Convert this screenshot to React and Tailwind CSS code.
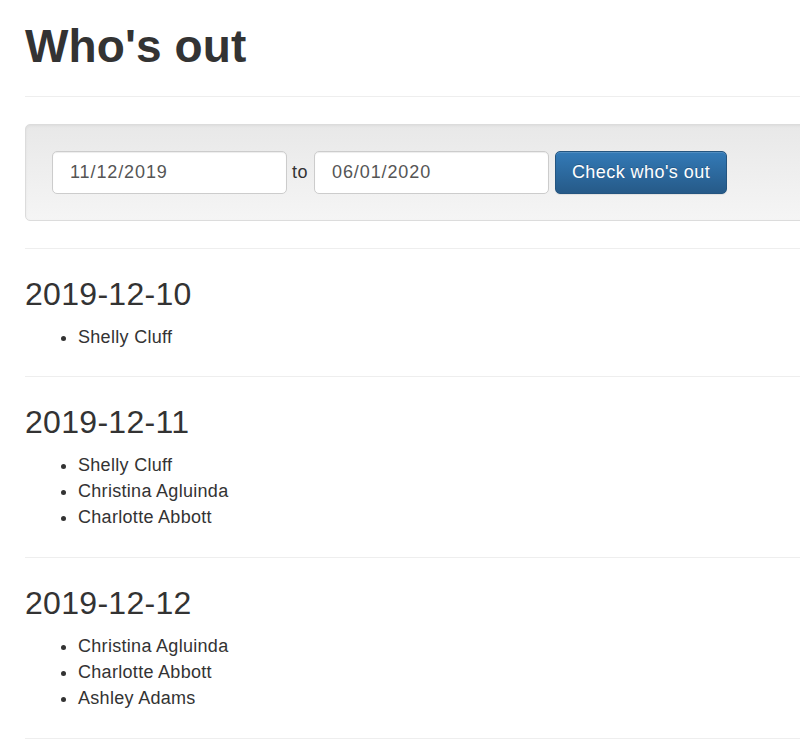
export default function App() {
  const days = [
    { date: "2019-12-10", people: ["Shelly Cluff"] },
    { date: "2019-12-11", people: ["Shelly Cluff", "Christina Agluinda", "Charlotte Abbott"] },
    { date: "2019-12-12", people: ["Christina Agluinda", "Charlotte Abbott", "Ashley Adams"] },
  ];
  return (
    <div className="w-[800px] h-[755px] overflow-hidden bg-white text-[#333]" style={{ fontFamily: '"Liberation Sans", Arial, sans-serif' }}>
      <div className="w-[1000px] pl-[25px]">
        <div className="pt-[21px] pb-[24px] border-b border-[#eee]">
          <h1 className="text-[46px] leading-[1.1] font-bold m-0 tracking-[0.1px]">Who's out</h1>
        </div>
        <div className="mt-[27px] w-[900px] border border-[#dcdcdc] rounded-[5px] p-[26px] bg-linear-to-b from-[#e8e8e8] to-[#f5f5f5] shadow-[inset_0_1px_3px_rgba(0,0,0,0.05)] flex items-center">
          <div className="w-[235px] h-[43px] bg-white border border-[#ccc] rounded-[5px] shadow-[inset_0_1px_1px_rgba(0,0,0,0.075)] flex items-center pl-[17px] text-[18px] tracking-[0.9px] text-[#555]">11/12/2019</div>
          <span className="ml-[5px] mr-[6px] text-[18px] tracking-[0.5px] text-[#333]">to</span>
          <div className="w-[235px] h-[43px] bg-white border border-[#ccc] rounded-[5px] shadow-[inset_0_1px_1px_rgba(0,0,0,0.075)] flex items-center pl-[17px] text-[18px] tracking-[0.9px] text-[#555]">06/01/2020</div>
          <div className="ml-[6px] w-[172px] h-[43px] rounded-[5px] border border-[#245580] bg-linear-to-b from-[#337ab7] to-[#265a88] text-white text-[18px] tracking-[0.45px] flex items-center justify-center shadow-[inset_0_1px_0_rgba(255,255,255,0.15),0_1px_1px_rgba(0,0,0,0.075)] [text-shadow:0_-1px_0_rgba(0,0,0,0.2)]">Check who's out</div>
        </div>
        <div className="mt-[27px] border-t border-[#eee]" />
        {days.map((d) => (
          <div key={d.date}>
            <h3 className="mt-[28px] mb-[13px] text-[32px] leading-[34px] font-normal tracking-[0.3px]">{d.date}</h3>
            <ul className="list-disc pl-[53px] m-0 text-[18px] leading-[26.3px] tracking-[0.3px]">
              {d.people.map((p, i) => (
                <li key={i}>{p}</li>
              ))}
            </ul>
            <div className="mt-[26px] border-t border-[#eee]" />
          </div>
        ))}
      </div>
    </div>
  );
}
